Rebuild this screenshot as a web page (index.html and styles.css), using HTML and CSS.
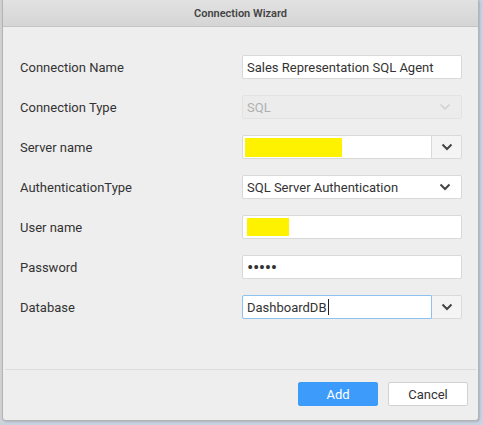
FILE: index.html
```html
<!DOCTYPE html>
<html>
<head>
<meta charset="utf-8">
<link rel="stylesheet" href="styles.css">
</head>
<body>
<div class="backdrop">
  <div class="dialog">
    <div class="titlebar">Connection Wizard</div>
    <div class="body">
      <div class="form">
        <div class="label">Connection Name</div>
        <div class="field"><span class="text">Sales Representation SQL Agent</span></div>

        <div class="label">Connection Type</div>
        <div class="field disabled"><span class="text">SQL</span>
          <svg class="chev" width="12" height="8" viewBox="0 0 12 8"><polyline points="1.5,1.5 6,6 10.5,1.5" fill="none" stroke="#cfcfcf" stroke-width="1.5"/></svg>
        </div>

        <div class="label">Server name</div>
        <div class="combo">
          <div class="field part"><span class="mask mask-wide"></span></div>
          <div class="btn-drop"><svg width="12" height="8" viewBox="0 0 12 8"><polyline points="1.5,1.5 6,6 10.5,1.5" fill="none" stroke="#444" stroke-width="2"/></svg></div>
        </div>

        <div class="label">AuthenticationType</div>
        <div class="field"><span class="text">SQL Server Authentication</span>
          <svg class="chev" width="12" height="8" viewBox="0 0 12 8"><polyline points="1.5,1.5 6,6 10.5,1.5" fill="none" stroke="#444" stroke-width="2"/></svg>
        </div>

        <div class="label">User name</div>
        <div class="field"><span class="mask mask-narrow"></span></div>

        <div class="label">Password</div>
        <div class="field"><span class="text dots">•••••</span></div>

        <div class="label">Database</div>
        <div class="combo">
          <div class="field part focus"><span class="text">DashboardDB</span><span class="caret"></span></div>
          <div class="btn-drop"><svg width="12" height="8" viewBox="0 0 12 8"><polyline points="1.5,1.5 6,6 10.5,1.5" fill="none" stroke="#444" stroke-width="2"/></svg></div>
        </div>
      </div>
    </div>
    <div class="footer">
      <button class="btn primary">Add</button>
      <button class="btn">Cancel</button>
    </div>
  </div>
</div>
</body>
</html>
```
FILE: styles.css
```css
html, body {
  margin: 0;
  padding: 0;
}
body {
  width: 483px;
  height: 425px;
  background: #c8d2e1;
  font-family: Roboto, "Liberation Sans", Arial, sans-serif;
  overflow: hidden;
}
.backdrop {
  display: flex;
  padding-left: 2px;
  background: linear-gradient(to right, #d0d0d0 0, #d0d0d0 2px, transparent 2px);
  height: 425px;
  box-sizing: border-box;
}
.dialog {
  width: 477px;
  height: 421px;
  box-sizing: border-box;
  border: 1px solid #b4b4b4;
  border-top: none;
  border-radius: 0 0 4px 4px;
  background: #eeeeee;
  display: flex;
  flex-direction: column;
  box-shadow: 1px 1px 2px rgba(0,0,0,0.15);
}
.titlebar {
  height: 27px;
  box-sizing: border-box;
  border-bottom: 1px solid #c4c4c4;
  background: linear-gradient(#e2e2e2, #d5d5d5);
  display: flex;
  align-items: center;
  justify-content: center;
  font-size: 11px;
  font-weight: 600;
  color: #444;
  padding-top: 1px;
}
.body {
  flex: 1;
  padding: 28px 14px 0 17px;
}
.form {
  display: grid;
  grid-template-columns: 222px 220px;
  grid-auto-rows: 24px;
  row-gap: 16px;
  align-items: center;
}
.label {
  font-size: 13px;
  color: #333;
}
.field {
  height: 24px;
  box-sizing: border-box;
  background: #fff;
  border: 1px solid #d9d9d9;
  border-radius: 2px;
  display: flex;
  align-items: center;
  padding: 0 10px 0 4px;
  font-size: 13px;
  color: #333;
}
.field .text {
  flex: 1;
  white-space: nowrap;
}
.field.disabled {
  background: #ececec;
  border-color: #e3e3e3;
  color: #b0b0b0;
}
.chev {
  flex: none;
}
.combo {
  display: flex;
  height: 24px;
}
.combo .part {
  flex: 1;
  border-radius: 2px 0 0 2px;
  padding-left: 2px;
}
.combo .part.focus {
  border-color: #8dc1f2;
  padding-left: 4px;
}
.combo .part.focus .text {
  flex: none;
}
.btn-drop {
  width: 30px;
  box-sizing: border-box;
  background: #f4f4f4;
  border: 1px solid #d9d9d9;
  border-left: none;
  border-radius: 0 2px 2px 0;
  display: flex;
  align-items: center;
  justify-content: center;
}
.mask {
  display: block;
  background: #fff200;
  height: 19px;
}
.mask-wide { width: 97px; }
.mask-narrow { width: 42px; height: 18px; }
.dots {
  font-size: 19px;
  line-height: 1;
  letter-spacing: -0.5px;
  color: #333;
}
.caret {
  display: inline-block;
  width: 1px;
  height: 16px;
  background: #222;
  margin-left: 1px;
}
.footer {
  margin: 0 2px;
  border-top: 1px solid #dcdcdc;
  height: 51px;
  box-sizing: border-box;
  display: flex;
  justify-content: flex-end;
  align-items: flex-start;
  gap: 10px;
  padding: 12px 8px 0 0;
}
.btn {
  width: 80px;
  height: 24px;
  box-sizing: border-box;
  border: 1px solid #d2d2d2;
  border-radius: 2px;
  background: #fff;
  font-family: Roboto, "Liberation Sans", Arial, sans-serif;
  font-size: 13px;
  color: #333;
  padding: 0;
}
.btn.primary {
  background: #3d9bfb;
  border-color: #3d9bfb;
  color: #fff;
}
```
